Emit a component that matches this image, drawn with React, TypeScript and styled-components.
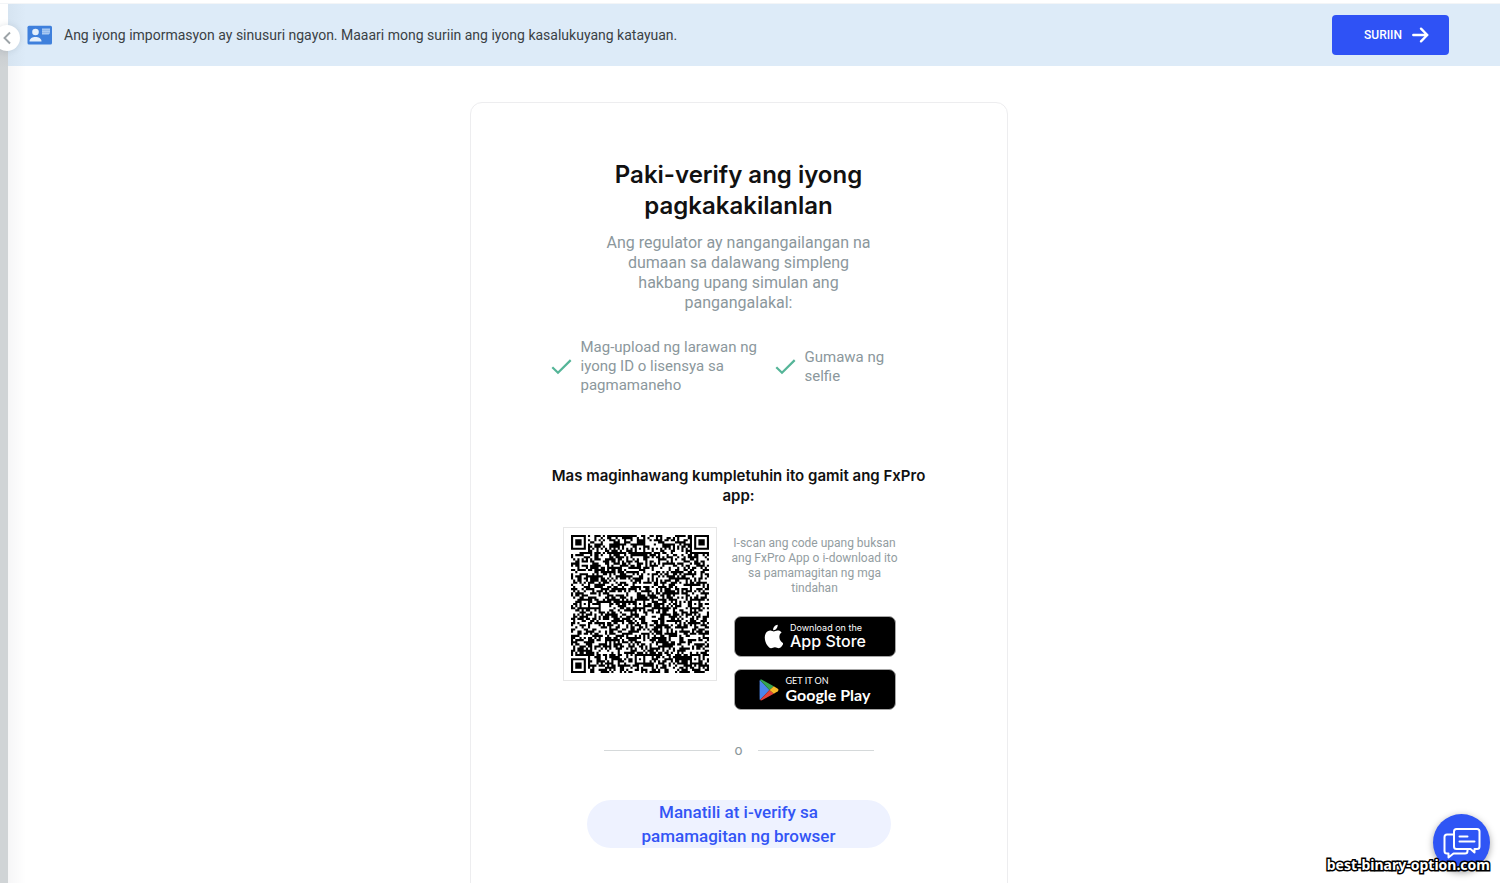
import React from 'react';
import styled, { createGlobalStyle, css } from 'styled-components';

const GlobalStyle = createGlobalStyle`
  *, *::before, *::after { box-sizing: border-box; }
  body {
    margin: 0;
    background: #fff;
    color: #8b979c;
    font-family: Roboto, "Liberation Sans", sans-serif;
  }
  h1, h2, p, ul { margin: 0; padding: 0; }
`;

const Shell = styled.div`
  position: relative;
  display: flex;
  flex-direction: column;
  height: 100vh;
  overflow: hidden;
`;

const TopEdge = styled.div`
  flex: none;
  height: 4px;
  border-bottom: 1px solid #f3f5f7;
`;

const Body = styled.div`
  display: flex;
  flex: 1;
  min-height: 0;
`;

const SideEdge = styled.aside`
  position: relative;
  flex: none;
  width: 8px;
  background: linear-gradient(#fff 0, #fff 32px, #c9cdd0 46px, #d0d4d6 64px);
`;

const CollapseButton = styled.button`
  position: absolute;
  z-index: 2;
  top: 21px;
  left: -6px;
  display: flex;
  align-items: center;
  justify-content: center;
  width: 26px;
  height: 26px;
  padding: 0;
  border: 0;
  border-radius: 50%;
  background: #fff;
  box-shadow: 0 0 6px rgba(60, 80, 100, 0.16);
`;

const Content = styled.div`
  flex: 1;
  min-width: 0;
  background: linear-gradient(90deg, #f6f6f7 0, #fff 18px);
`;

const Banner = styled.header`
  display: flex;
  align-items: center;
  gap: 11px;
  height: 62px;
  padding: 0 51px 0 19px;
  background: linear-gradient(90deg, #d6e4f1 0, #ddebf8 18px);
`;

const BannerText = styled.p`
  flex: 1;
  color: #3a4145;
  font-size: 14px;
  line-height: 20px;
`;

const CheckButton = styled.button`
  display: flex;
  align-items: center;
  justify-content: flex-end;
  gap: 10px;
  width: 117px;
  height: 40px;
  padding: 0 20px 0 0;
  border: 0;
  border-radius: 4px;
  background: #2f52f5;
  color: #fff;
  font: 500 12px/20px Roboto, sans-serif;
`;

const Main = styled.main`
  display: flex;
  justify-content: center;
  padding: 36px 31px 0 0;
`;

const Card = styled.section`
  display: flex;
  flex-direction: column;
  align-items: center;
  width: 538px;
  padding: 56px 64px;
  border: 1px solid #ededef;
  border-radius: 12px;
  background: #fff;
  text-align: center;
`;

const Title = styled.h1`
  width: 270px;
  color: #111;
  font: 600 24px/31px Inter, sans-serif;
`;

const Lead = styled.p`
  width: 272px;
  margin-top: 12px;
  font-size: 16px;
  line-height: 20px;
`;

const Steps = styled.ul`
  display: flex;
  align-items: center;
  gap: 12px;
  width: 376px;
  margin-top: 25px;
  list-style: none;
  text-align: left;
`;

const Step = styled.li<{ $width: number }>`
  display: flex;
  align-items: center;
  gap: 8px;
  width: ${(p) => p.$width}px;
  font-size: 15px;
  line-height: 19px;

  svg { flex: none; }
`;

const AppTitle = styled.h2`
  width: 400px;
  margin-top: 71px;
  color: #111;
  font: 600 15px/20px Inter, sans-serif;
`;

const AppRow = styled.div`
  display: flex;
  gap: 12px;
  margin-top: 21px;
  padding-right: 14px;
`;

const QrFrame = styled.div`
  width: 154px;
  height: 154px;
  padding: 7px;
  border: 1px solid #e6e6e6;

  svg { display: block; width: 138px; height: 138px; }
`;

const Stores = styled.div`
  display: flex;
  flex-direction: column;
  align-items: center;
  gap: 12px;
  width: 172px;
`;

const Hint = styled.p`
  margin: 9px 0 8px;
  color: #939da1;
  font-size: 12px;
  line-height: 15px;
`;

const StoreLink = styled.a`
  display: flex;
  align-items: center;
  justify-content: center;
  gap: 7px;
  width: 162px;
  height: 41px;
  border: 1px solid #a6a6a6;
  border-radius: 7px;
  background: #000;
  color: #fff;
  text-align: left;
  text-decoration: none;
`;

const StoreText = styled.span`
  display: flex;
  flex-direction: column;
`;

const StoreCaption = styled.small<{ $google?: boolean }>`
  font: 400 9px/10px Inter, sans-serif;
  ${(p) => p.$google && css`font: 400 9px/10px Lato, sans-serif;`}
`;

const StoreName = styled.strong<{ $google?: boolean }>`
  font: 500 16px/17px Inter, sans-serif;
  ${(p) => p.$google && css`font: 700 16px/18px Lato, sans-serif;`}
`;

const Divider = styled.div`
  display: flex;
  align-items: center;
  gap: 15px;
  width: 270px;
  margin-top: 30px;
  font-size: 14px;
  line-height: 20px;

  &::before, &::after {
    content: '';
    flex: 1;
    height: 1px;
    background: #d5d9da;
  }
`;

const BrowserButton = styled.button`
  width: 304px;
  margin-top: 40px;
  padding: 0 48px;
  border: 0;
  border-radius: 25px;
  background: #eef2ff;
  color: #3355f5;
  font: 500 17px/24px Roboto, sans-serif;
`;

const ChatButton = styled.button`
  position: absolute;
  right: 10px;
  bottom: 12px;
  display: flex;
  align-items: center;
  justify-content: center;
  width: 57px;
  height: 57px;
  padding: 0;
  border: 0;
  border-radius: 50%;
  background: #2f55f5;
  box-shadow: 0 2px 7px rgba(0, 0, 0, 0.35);
`;

const SiteMark = styled.span`
  position: absolute;
  right: 10px;
  bottom: 10px;
  color: #fff;
  font: 700 14px/16px "Noto Sans", sans-serif;
  -webkit-text-stroke: 3px #000;
  paint-order: stroke fill;
`;

const QR_SIZE = 65;
const ALIGNMENT = [6, 32, 58];

function finderCell(x: number, y: number): boolean | null {
  const corners = [[0, 0], [QR_SIZE - 7, 0], [0, QR_SIZE - 7]];
  for (const [cx, cy] of corners) {
    const dx = x - cx;
    const dy = y - cy;
    if (dx >= -1 && dx <= 7 && dy >= -1 && dy <= 7) {
      const ring = Math.max(Math.abs(dx - 3), Math.abs(dy - 3));
      return ring === 3 || ring <= 1;
    }
  }
  for (const ax of ALIGNMENT) {
    for (const ay of ALIGNMENT) {
      const ring = Math.max(Math.abs(x - ax), Math.abs(y - ay));
      if (ring <= 2) return ring !== 1;
    }
  }
  return null;
}

function buildQr(): string {
  let seed = 20231;
  let d = '';
  for (let y = 0; y < QR_SIZE; y++) {
    for (let x = 0; x < QR_SIZE; x++) {
      seed = (Math.imul(seed, 1664525) + 1013904223) >>> 0;
      const fixed = finderCell(x, y);
      const timing = x === 6 || y === 6 ? (x + y) % 2 === 0 : null;
      const on = fixed ?? timing ?? (seed >>> 16) % 100 < 53;
      if (on) d += `M${x} ${y}h1v1h-1z`;
    }
  }
  return d;
}

const qrPath = buildQr();

const CheckIcon = () => (
  <svg width="22" height="22" viewBox="0 0 22 22" fill="none" stroke="#55b598" strokeWidth="2.2" aria-hidden="true">
    <path d="M1.3 11.2l5.7 5.6L19.7 4.1" />
  </svg>
);

const AppleIcon = () => (
  <svg width="20" height="25" viewBox="2 1.5 16.5 21" fill="#fff" aria-hidden="true">
    <path d="M15.6 12.1c0-2.2 1.8-3.3 1.9-3.4-1-1.5-2.6-1.7-3.2-1.7-1.4-.1-2.7.8-3.4.8S9.2 7 8 7C6.5 7 5 7.9 4.2 9.300c-1.800 3-.5 7.500 1.200 10 .9 1.200 1.900 2.500 3.200 2.500s1.800-.8 3.300-.8 2 .8 3.300.8c1.400 0 2.200-1.200 3-2.400.4-.6.6-1.100.8-1.700-.1 0-3.400-1.300-3.400-5.600z" />
    <path d="M13.200 5.300c.7-.8 1.100-1.900 1-3.100-1 .1-2.100.7-2.800 1.500-.6.700-1.200 1.900-1 3 1.100.1 2.200-.5 2.800-1.400z" />
  </svg>
);

const PlayIcon = () => (
  <svg width="20" height="22" viewBox="0 0 20 22" aria-hidden="true">
    <path fill="#4b86ec" d="M1 1C.7 1.300.6 1.700.6 2.200v17.600c0 .5.100.9.4 1.200L10.500 11z" />
    <path fill="#36a552" d="M1 1l9.500 10 4.300-3.800L3.400.9C2.400.4 1.600.5 1 1z" />
    <path fill="#e4433b" d="M1 21l9.500-10 4.300 3.800L3.400 21.100c-1 .5-1.800.4-2.400-.1z" />
    <path fill="#f6b928" d="M14.800 7.200l4 2.600c.9.6.9 1.800 0 2.400l-4 2.600L10.500 11z" />
  </svg>
);

export default function App() {
  return (
    <>
      <GlobalStyle />
      <Shell>
        <TopEdge />
        <Body>
          <SideEdge>
            <CollapseButton aria-label="Isara ang menu">
              <svg width="10" height="14" viewBox="0 0 10 14" fill="none" stroke="#9da4a8" strokeWidth="1.9" aria-hidden="true">
                <path d="M8 1.500L2.500 7 8 12.500" />
              </svg>
            </CollapseButton>
          </SideEdge>
          <Content>
            <Banner>
              <svg width="26" height="20" viewBox="0 0 26 20" aria-hidden="true">
                <rect x=".5" y=".8" width="24.500" height="18.700" rx="1.500" fill="#3f80dc" />
                <circle cx="8.500" cy="7" r="3.300" fill="#e4effb" />
                <path d="M2.500 16.500c0-3.300 3-4.500 6-4.500s6 1.200 6 4.500z" fill="#e4effb" />
                <path d="M15 3.500h8v4.500l-1.200 1.500H15z" fill="#a9c9f2" />
                <path d="M15 5.400h8M15 7.500h8" stroke="#7fabe8" strokeWidth=".6" />
              </svg>
              <BannerText>
                Ang iyong impormasyon ay sinusuri ngayon. Maaari mong suriin ang iyong kasalukuyang katayuan.
              </BannerText>
              <CheckButton>
                SURIIN
                <svg width="17" height="16" viewBox="0 0 17 16" fill="none" stroke="#fff" strokeWidth="2.4" strokeLinecap="round" strokeLinejoin="round" aria-hidden="true">
                  <path d="M1.300 8h14M9 1.700L15.300 8 9 14.300" />
                </svg>
              </CheckButton>
            </Banner>
            <Main>
              <Card>
                <Title>Paki-verify ang iyong pagkakakilanlan</Title>
                <Lead>
                  Ang regulator ay nangangailangan na dumaan sa dalawang simpleng hakbang upang simulan ang pangangalakal:
                </Lead>
                <Steps>
                  <Step $width={212}>
                    <CheckIcon />
                    Mag-upload ng larawan ng iyong ID o lisensya sa pagmamaneho
                  </Step>
                  <Step $width={120}>
                    <CheckIcon />
                    Gumawa ng selfie
                  </Step>
                </Steps>
                <AppTitle>Mas maginhawang kumpletuhin ito gamit ang FxPro app:</AppTitle>
                <AppRow>
                  <QrFrame>
                    <svg viewBox="0 0 65 65" role="img" aria-label="QR code">
                      <path d={qrPath} fill="#000" />
                    </svg>
                  </QrFrame>
                  <Stores>
                    <Hint>I-scan ang code upang buksan ang FxPro App o i-download ito sa pamamagitan ng mga tindahan</Hint>
                    <StoreLink href="#app-store">
                      <AppleIcon />
                      <StoreText>
                        <StoreCaption>Download on the</StoreCaption>
                        <StoreName>App Store</StoreName>
                      </StoreText>
                    </StoreLink>
                    <StoreLink href="#google-play">
                      <PlayIcon />
                      <StoreText>
                        <StoreCaption $google>GET IT ON</StoreCaption>
                        <StoreName $google>Google Play</StoreName>
                      </StoreText>
                    </StoreLink>
                  </Stores>
                </AppRow>
                <Divider>o</Divider>
                <BrowserButton>Manatili at i-verify sa pamamagitan ng browser</BrowserButton>
              </Card>
            </Main>
          </Content>
        </Body>
        <ChatButton aria-label="Chat">
          <svg width="38" height="32" viewBox="0 0 38 32" fill="none" stroke="#fff" strokeWidth="2" strokeLinejoin="round" strokeLinecap="round" aria-hidden="true">
            <path d="M13.500 2h20.500a2.500 2.500 0 0 1 2.500 2.500v15a2.500 2.500 0 0 1-2.500 2.500h-2.500v3.500L27.500 22h-14a2.500 2.500 0 0 1-2.500-2.500v-15A2.500 2.500 0 0 1 13.500 2z" />
            <path d="M11 7.500H4A2.500 2.500 0 0 0 1.500 10v14A2.500 2.500 0 0 0 4 26.500h1.500v4l5-4H22a2.500 2.500 0 0 0 2.500-2.500v-2" />
            <path d="M16.500 9.500h8M16.500 14.500h15" />
          </svg>
        </ChatButton>
        <SiteMark>best-binary-option.com</SiteMark>
      </Shell>
    </>
  );
}
